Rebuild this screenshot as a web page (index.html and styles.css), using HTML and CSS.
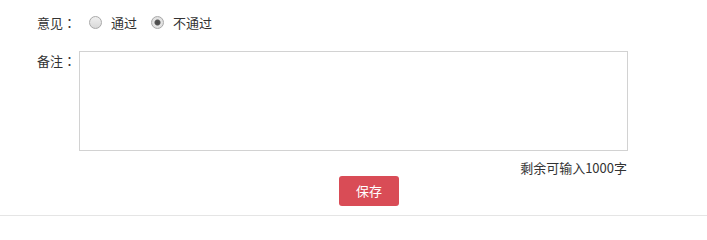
FILE: index.html
```html
<!DOCTYPE html>
<html lang="zh-CN">
<head>
<meta charset="utf-8">
<title>审核</title>
<link rel="stylesheet" href="styles.css">
</head>
<body>
<form class="form">
  <div class="row row-opinion">
    <span class="label">意见<span class="colon" lang="ja">：</span></span>
    <label class="radio"><span class="radio-dot"></span><span class="radio-text">通过</span></label>
    <label class="radio"><span class="radio-dot checked"></span><span class="radio-text">不通过</span></label>
  </div>
  <div class="row row-note">
    <span class="label">备注<span class="colon" lang="ja">：</span></span>
    <div class="textarea"></div>
  </div>
  <div class="counter">剩余可输入1000字</div>
  <div class="actions">
    <button type="button" class="btn-save">保存</button>
  </div>
</form>
<div class="divider"></div>
</body>
</html>
```
FILE: styles.css
```css
html, body {
  margin: 0;
  padding: 0;
  background: #fff;
}
body {
  font-family: "Noto Sans CJK SC", "Microsoft YaHei", sans-serif;
  font-size: 13px;
  color: #333;
  width: 707px;
  height: 222px;
  overflow: hidden;
}
.form {
  padding: 13px 0 0 37px;
}
.row {
  display: flex;
}
.row-opinion {
  align-items: center;
  height: 20px;
  line-height: 20px;
}
.label {
  width: 42px;
  flex: none;
  line-height: 20px;
}
.colon {
  font-family: "Noto Sans CJK JP", "Noto Sans CJK SC", sans-serif;
}
.radio {
  display: flex;
  align-items: center;
  margin-left: 10px;
}
.radio + .radio {
  margin-left: 14px;
}
.radio-dot {
  width: 11px;
  height: 11px;
  border: 1px solid #a9a9a9;
  border-radius: 50%;
  background: linear-gradient(#f0f0f0, #d8d8d8);
  position: relative;
  box-sizing: content-box;
  margin-top: -2px;
}
.radio-dot.checked {
  background: radial-gradient(circle, #4a4a4a 0, #555 2.5px, #e6e6e6 3.5px, #d6d6d6 100%);
}
.radio-text {
  margin-left: 9px;
}
.row-note {
  margin-top: 18px;
}
.textarea {
  width: 547px;
  height: 98px;
  border: 1px solid #d2d2d2;
  background: #fff;
}
.counter {
  margin: 9px 0 0 42px;
  width: 548px;
  text-align: right;
  line-height: 16px;
  color: #333;
}
.actions {
  padding-left: 302px;
  height: 30px;
}
.btn-save {
  display: block;
  width: 60px;
  height: 30px;
  border: 0;
  border-radius: 3px;
  background: #d94c56;
  color: #fff;
  font-family: inherit;
  font-size: 13px;
  padding: 0;
  line-height: 30px;
}
.divider {
  margin-top: 9px;
  height: 1px;
  background: #e5e5e5;
}
```
